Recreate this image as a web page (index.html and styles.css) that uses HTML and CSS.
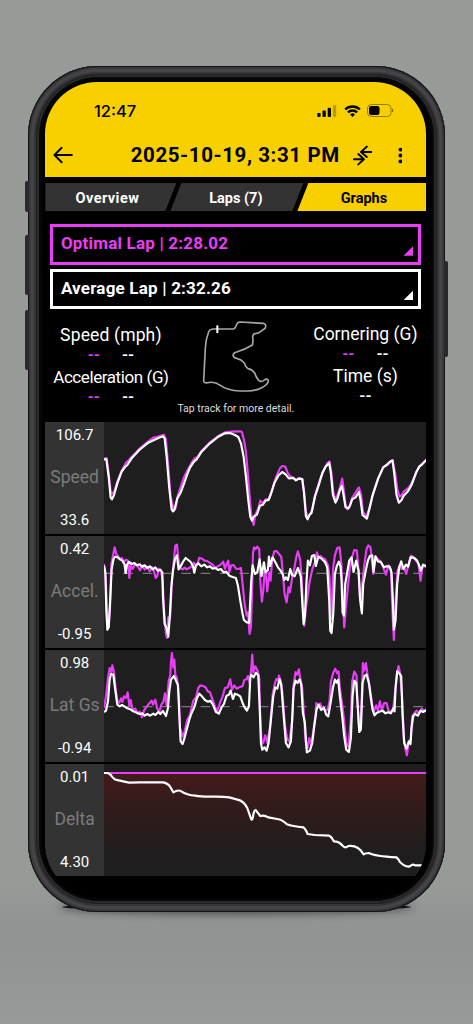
FILE: index.html
```html
<!DOCTYPE html>
<html lang="en">
<head>
  <meta charset="UTF-8">
  <meta name="viewport" content="width=device-width, initial-scale=1.0">
  <title>Session Graphs</title>
  <link rel="stylesheet" href="styles.css">
</head>
<body>
  <div class="phone">
    <span class="side-button mute"></span>
    <span class="side-button vol-up"></span>
    <span class="side-button vol-down"></span>
    <span class="side-button power"></span>

    <div class="screen">
      <header>
        <div class="status-bar">
          <span class="clock">12:47</span>
          <svg class="signal" width="20" height="12" viewBox="0 0 20 12">
            <rect x="0.3" y="8" width="3.3" height="4" rx="1"/>
            <rect x="5.5" y="5.6" width="3.3" height="6.4" rx="1"/>
            <rect x="10.7" y="2.8" width="3.3" height="9.2" rx="1"/>
            <rect x="15.9" y="0" width="3.3" height="12" rx="1" opacity="0.25"/>
          </svg>
          <svg class="wifi" width="17" height="12" viewBox="0 0 17 12">
            <path d="M1.2 4.5a10.4 10.4 0 0 1 14.6 0M3.9 7.4a6.5 6.5 0 0 1 9.2 0" fill="none" stroke="#000" stroke-width="2.3"/>
            <path d="M8.500 12l-2.500-2.600a3.600 3.600 0 0 1 5 0z"/>
          </svg>
          <svg class="battery" width="27" height="13" viewBox="0 0 27 13">
            <rect x="0.5" y="0.5" width="23.500" height="12" rx="3.800" fill="none" stroke="#000" stroke-opacity="0.4"/>
            <rect x="2" y="2" width="10.500" height="9" rx="2.300"/>
            <path d="M25 4.500q1.400 .6 1.400 2t-1.400 2z" opacity="0.45"/>
          </svg>
        </div>

        <div class="title-bar">
          <svg class="back" width="21" height="18" viewBox="0 0 21 18">
            <path d="M9 1.500L1.500 9L9 16.500M1.500 9H19.500"/>
          </svg>
          <h1>2025-10-19, 3:31 PM</h1>
          <svg class="compare" width="20" height="21" viewBox="0 0 20 21">
            <path d="M14.300 1.300L8.300 6.800L14.300 12M8.300 6.800H19M5.500 9L11.300 14.300L5.500 19.700M11.300 14.300H1"/>
          </svg>
          <svg class="more" width="5" height="17" viewBox="0 0 5 17">
            <circle cx="2.500" cy="2.400" r="2"/><circle cx="2.500" cy="8.500" r="2"/><circle cx="2.500" cy="14.600" r="2"/>
          </svg>
        </div>
      </header>

      <nav class="tabs">
        <div class="tab tab-first">Overview</div>
        <div class="tab tab-middle">Laps (7)</div>
        <div class="tab tab-last active">Graphs</div>
      </nav>

      <div class="laps">
        <div class="lap optimal">Optimal Lap | 2:28.02</div>
        <div class="lap average">Average Lap | 2:32.26</div>
      </div>

      <section class="stats">
        <div class="stat-col left">
          <div class="name speed">Speed (mph)</div>
          <div class="values"><span class="purple">--</span><span>--</span></div>
          <div class="name acceleration">Acceleration (G)</div>
          <div class="values"><span class="purple">--</span><span>--</span></div>
        </div>
        <div class="track">
          <svg width="68" height="74" viewBox="486 316 204 222">
            <path class="outline" d="M580 343H518Q506 345 504 358Q497 375 496 400L491 498Q492 506 503 504C520 500 530 504 541 512C560 526 580 528 600 529H625Q648 528 665 519Q686 508 685 497Q681 490 673 496Q664 504 656 497Q648 487 644 475Q636 464 624 462Q616 456 613 445Q604 434 590 431C576 428 576 415 590 412Q612 406 637 391Q640 380 638 368Q638 356 650 356Q658 355 661 351L675 341Q681 329 670 326L600 322Q592 322 589 332Q585 343 580 343Z"/>
            <path class="start" d="M532 332V355"/>
          </svg>
          <p>Tap track for more detail.</p>
        </div>
        <div class="stat-col right">
          <div class="name cornering">Cornering (G)</div>
          <div class="values"><span class="purple">--</span><span>--</span></div>
          <div class="name time">Time (s)</div>
          <div class="values"><span>--</span></div>
        </div>
      </section>

      <section class="charts">
        <div class="chart">
          <div class="axis"><span>106.7</span><b>Speed</b><span>33.6</span></div>
          <svg viewBox="192 6 968 336" preserveAspectRatio="none">
            <polyline class="opt" points="192,116 200,114 206,160 212,215 217,220 223,215 232,185 245,152 258,128 266,121 275,111 300,85 325,64 340,53 350,51 372,44 378,60 384,130 392,230 402,272 407,264 414,225 424,195 432,172 442,152 455,128 465,114 472,112 485,92 510,67 535,48 555,37 575,35 600,34 606,36 612,60 618,95 622,140 628,215 634,285 641,315 646,285 655,265 661,242 669,250 677,238 686,238 697,210 708,172 720,145 727,138 736,140 743,158 750,168 762,174 768,180 777,174 787,177 793,220 798,275 804,292 812,280 817,270 826,225 840,180 852,150 862,130 869,124 874,155 880,215 886,238 893,225 900,203 907,176 911,205 917,255 922,268 929,262 936,235 944,222 957,202 964,225 969,275 980,290 990,260 1000,220 1015,175 1030,142 1046,132 1058,122 1066,160 1073,210 1079,230 1086,225 1092,214 1106,204 1116,188 1130,155 1140,138 1158,120"/>
            <polyline class="avg" points="192,118 199,118 206,170 212,233 216,238 222,225 232,190 245,155 255,141 262,135 275,115 300,88 325,68 350,56 368,49 374,55 380,110 388,205 395,268 399,274 404,268 412,235 422,218 431,194 440,168 450,143 462,125 470,118 485,95 510,70 535,50 555,40 570,39 585,45 595,51 603,70 611,110 618,170 625,240 631,290 636,302 641,290 651,284 660,257 669,254 677,242 686,240 693,222 703,190 715,167 727,156 737,163 747,175 760,174 768,181 777,176 787,177 792,215 798,288 803,298 808,286 815,278 825,230 835,200 847,160 857,140 868,129 873,160 879,225 887,248 893,235 900,210 906,198 911,225 917,262 925,265 931,255 937,238 947,232 957,216 962,240 968,285 981,296 989,265 997,230 1005,205 1015,175 1030,142 1040,135 1050,125 1058,121 1063,160 1070,225 1077,248 1085,240 1091,228 1105,213 1115,195 1130,155 1138,140 1147,133 1160,119"/>
          </svg>
        </div>

        <div class="chart">
          <div class="axis"><span>0.42</span><b>Accel.</b><span>-0.95</span></div>
          <svg viewBox="192 6 968 336" preserveAspectRatio="none">
            <path class="zero" d="M192 118H1160"/>
            <polyline class="opt" points="192,90 197,130 202,250 206,280 210,220 214,90 219,65 224,40 229,60 234,66 240,75 246,72 252,84 258,77 264,80 268,132 272,92 278,105 286,90 294,98 300,109 307,95 314,107 322,98 329,112 336,100 342,112 347,132 352,126 356,104 363,112 368,140 373,240 378,300 381,312 385,250 390,255 396,140 402,75 406,35 411,32 415,75 421,102 428,106 434,101 440,106 448,102 455,97 462,86 468,96 473,88 478,71 486,74 494,80 502,81 510,87 518,92 526,101 534,97 542,92 550,83 555,104 560,90 565,80 568,115 574,94 581,93 588,104 596,105 603,102 608,150 614,210 620,245 624,235 629,300 633,280 636,190 639,60 642,40 647,45 652,38 658,45 661,140 666,203 670,170 674,115 678,120 682,172 688,115 692,140 697,75 703,52 710,51 717,60 724,68 728,108 734,180 740,205 746,160 750,175 757,130 762,110 769,70 774,52 781,78 785,130 790,230 793,276 798,220 802,195 808,150 814,120 819,100 827,80 831,55 836,72 842,66 848,72 855,75 864,93 869,130 873,255 876,210 880,100 885,64 892,42 899,40 904,85 909,190 913,280 918,220 924,160 930,100 936,72 943,48 951,50 956,110 960,190 964,180 969,130 974,88 980,45 985,34 992,40 997,90 1000,120 1006,67 1015,77 1022,82 1030,100 1038,122 1046,94 1053,105 1058,240 1062,318 1067,200 1073,110 1080,94 1085,105 1092,98 1099,120 1107,88 1114,65 1122,72 1130,82 1136,90 1142,140 1148,96 1160,98"/>
            <polyline class="avg" points="192,95 196,115 199,230 202,287 206,280 210,210 215,105 221,74 226,68 233,70 240,76 247,80 254,92 257,117 261,92 267,84 276,90 283,87 291,94 299,91 306,98 314,94 322,102 330,97 338,106 346,100 353,110 361,107 367,115 369,190 374,270 379,280 385,308 390,240 394,160 399,110 405,75 411,64 416,106 423,95 430,82 437,72 445,78 452,84 459,96 463,116 468,94 475,88 484,97 493,92 502,100 510,97 518,104 526,102 535,108 543,105 551,115 559,113 568,125 578,129 588,132 594,155 601,200 608,240 612,258 617,262 621,265 628,266 630,220 634,140 638,94 645,120 652,115 659,76 665,126 672,85 677,115 684,108 687,68 691,96 698,70 706,84 714,100 722,110 729,122 733,138 738,130 744,138 751,105 757,124 764,127 774,102 779,115 783,130 788,220 791,270 795,245 800,140 804,80 810,94 816,66 823,63 828,96 835,68 845,74 855,84 862,100 868,200 871,290 875,297 880,240 885,120 891,95 897,83 902,98 905,140 908,235 912,245 916,150 922,115 928,80 935,70 941,114 949,80 956,110 961,200 966,238 970,150 978,108 984,80 990,66 997,64 1001,114 1007,67 1014,82 1023,84 1032,100 1040,97 1049,98 1055,115 1059,200 1062,287 1067,260 1072,150 1078,100 1084,82 1091,105 1098,92 1105,98 1112,70 1122,71 1132,80 1138,95 1143,110 1150,92 1160,97"/>
          </svg>
        </div>

        <div class="chart">
          <div class="axis"><span>0.98</span><b>Lat Gs</b><span>-0.94</span></div>
          <svg viewBox="192 6 968 336" preserveAspectRatio="none">
            <path class="zero" d="M192 176H1160"/>
            <polyline class="opt" points="192,180 198,145 204,90 209,60 214,72 217,52 222,72 226,112 232,160 238,164 243,151 247,162 252,145 258,150 263,133 268,172 272,156 278,185 286,182 293,196 299,191 306,208 312,188 320,176 328,166 335,158 339,170 346,155 351,180 358,192 364,170 370,162 375,136 380,174 386,100 391,80 393,40 396,15 400,58 403,35 406,80 411,90 417,150 420,240 428,265 434,250 442,215 450,200 460,158 468,148 475,120 481,112 489,114 497,118 503,130 510,133 518,155 525,175 532,190 540,165 548,145 555,120 563,118 571,94 576,125 583,112 590,122 598,118 608,115 613,96 620,94 624,84 629,106 634,60 637,20 640,73 646,55 653,68 658,90 660,180 665,280 670,285 676,262 682,285 690,240 698,140 704,110 709,93 714,98 717,83 722,98 727,130 735,230 742,275 748,280 757,220 761,110 767,72 772,80 777,64 780,85 787,120 792,200 797,280 803,300 808,270 814,290 820,250 827,200 829,165 834,172 841,166 845,180 850,176 857,190 864,182 869,160 873,100 880,75 886,62 892,76 896,70 900,120 907,170 913,220 920,290 926,295 933,210 937,100 943,71 950,82 952,150 957,230 963,220 966,140 969,45 973,68 978,45 983,80 990,120 997,170 1002,190 1009,172 1014,188 1020,160 1026,187 1033,165 1040,165 1046,188 1054,193 1060,182 1066,130 1071,80 1076,54 1081,78 1087,150 1092,270 1097,305 1101,322 1106,290 1113,270 1117,205 1124,195 1130,188 1138,196 1146,182 1152,188 1160,187"/>
            <polyline class="avg" points="192,192 198,188 204,160 209,95 213,78 220,80 225,120 232,170 239,175 246,171 254,176 262,181 271,184 280,190 290,194 299,198 307,196 314,203 322,198 330,203 340,197 346,201 355,192 361,198 369,189 378,204 384,180 388,130 393,95 402,84 408,98 414,110 418,200 422,280 428,288 433,272 440,245 448,215 455,195 463,178 471,150 478,137 486,145 495,156 503,161 511,158 519,170 528,192 537,197 545,178 552,168 560,143 567,140 572,128 579,153 585,137 593,140 601,145 608,165 614,178 621,188 627,175 631,90 634,80 641,88 648,74 655,82 659,170 663,285 667,305 674,298 680,308 686,285 693,215 700,145 706,118 712,122 719,94 724,110 731,200 738,285 746,298 753,280 758,190 761,120 767,98 773,105 779,94 784,110 789,195 795,225 799,290 801,313 810,308 817,285 823,235 830,185 836,170 844,186 852,180 859,200 865,205 872,165 879,120 885,95 890,104 895,95 900,145 907,205 913,265 919,305 927,312 933,270 938,145 943,98 949,105 954,180 958,252 963,245 968,105 974,84 980,80 987,105 993,150 998,185 1004,202 1010,195 1018,191 1028,188 1037,196 1045,193 1053,196 1061,180 1064,190 1067,120 1072,70 1080,78 1084,85 1088,200 1093,285 1100,302 1107,280 1112,288 1115,240 1120,205 1126,198 1134,203 1142,188 1150,192 1160,186"/>
          </svg>
        </div>

        <div class="chart delta">
          <div class="axis"><span>0.01</span><b>Delta</b><span>4.30</span></div>
          <svg viewBox="192 6 968 336" preserveAspectRatio="none">
            <defs>
              <linearGradient id="loss" x1="0" y1="0" x2="0" y2="1">
                <stop offset="0" stop-color="#431a1a"/>
                <stop offset="0.35" stop-color="#321b1b"/>
                <stop offset="0.8" stop-color="#1e1e1e"/>
              </linearGradient>
            </defs>
            <rect x="192" y="36" width="968" height="306" fill="url(#loss)"/>
            <path class="opt base" d="M192 33H1160"/>
            <path class="avg" d="M192 33H203Q213 37 217 45Q223 54 236 55L267 62L300 61H370Q386 65 391 75L400 91Q415 82 424 88Q440 99 466 101Q480 104 510 104Q550 103 568 106L590 112Q612 116 622 138L634 172Q637 176 639 165Q642 142 648 145L661 162Q673 158 685 166L712 171Q727 173 741 187Q757 193 790 196Q796 199 803 216L825 219L868 221Q875 224 882 238Q898 238 909 252Q917 260 925 252Q955 248 971 277Q977 273 987 273Q1005 283 1070 286Q1078 293 1080 300Q1102 320 1113 311Q1118 305 1126 310H1150"/>
          </svg>
        </div>
      </section>
    </div>
  </div>
  <div class="ground-shadow"></div>
</body>
</html>
```
FILE: styles.css
```css
:root {
  --yellow: #f8d000;
  --purple: #ea3df7;
  --panel: #333;
  --plot: #1e1e1e;
}

* {
  box-sizing: border-box;
}

body {
  margin: 0;
  width: 473px;
  height: 1024px;
  overflow: hidden;
  position: relative;
  background: linear-gradient(#969b98 0%, #969b98 86%, #8f9391 91%, #969a98 100%);
  font-family: Roboto, sans-serif;
  color: #fff;
}

svg {
  display: block;
}

.phone {
  position: relative;
  z-index: 1;
  width: 417px;
  height: 846px;
  margin: 66px 0 0 28px;
  padding: 16px 18.600px 16px 17.400px;
  border-radius: 70px;
  background: #000;
  box-shadow:
    inset 0 0 0 1px #141416,
    inset 0 0 0 3px #39393c,
    inset 0 0 0 6px #454448,
    inset 0 0 0 8px #353537,
    inset 0 0 0 9px #1f1f20,
    inset 0 0 0 11px #2a2a2a,
    inset 0 0 4px 12px #111;
}

.side-button {
  position: absolute;
  width: 4px;
  left: -3px;
  border-radius: 2px 0 0 2px;
  background: #29292c;
  z-index: -1;
}

.mute {
  top: 115px;
  height: 31px;
}

.vol-up {
  top: 169px;
  height: 60px;
}

.vol-down {
  top: 244px;
  height: 60px;
}

.power {
  top: 195px;
  height: 96px;
  left: auto;
  right: -3px;
  border-radius: 0 2px 2px 0;
}

.screen {
  height: 814px;
  border-radius: 52px;
  overflow: hidden;
  background: #000;
}

header {
  height: 95px;
  background: var(--yellow);
  color: #000;
}

.status-bar {
  display: flex;
  align-items: center;
  height: 57px;
  padding: 0 32px 0 48.500px;
}

.clock {
  font-family: Inter, sans-serif;
  font-size: 16.5px;
  font-weight: 500;
  flex: 1;
}

.wifi {
  margin: 0 6px 0 7px;
}

.title-bar {
  display: flex;
  align-items: center;
  height: 32px;
  padding: 0 24px 0 8px;
}

.back,
.compare {
  fill: none;
  stroke: #000;
  stroke-width: 2;
  stroke-linecap: round;
  stroke-linejoin: round;
}

h1 {
  flex: 1;
  margin: 0 13px 0 57px;
  font-size: 20.5px;
  font-weight: 700;
  letter-spacing: 0.6px;
  white-space: nowrap;
}

.compare {
  margin-right: 25.500px;
}

.tabs {
  display: flex;
  height: 28px;
  margin: 6px 0 13.300px;
  font-size: 14.5px;
  font-weight: 700;
  line-height: 32px;
  text-align: center;
}

.tab {
  background: var(--panel);
}

.tab-first {
  width: 131px;
  padding-right: 7px;
  letter-spacing: 0.45px;
  clip-path: polygon(0 0, 100% 0, calc(100% - 11px) 100%, 0 100%);
}

.tab-middle {
  width: 133px;
  margin-left: -6px;
  padding-right: 2px;
  clip-path: polygon(11px 0, 100% 0, calc(100% - 11px) 100%, 0 100%);
}

.tab-last {
  flex: 1;
  margin-left: -6px;
  padding-left: 4px;
  clip-path: polygon(11px 0, 100% 0, 100% 100%, 0 100%);
}

.tab.active {
  background: var(--yellow);
  color: #000;
}

.laps {
  display: flex;
  flex-direction: column;
  gap: 4px;
  padding: 0 5px;
}

.lap {
  position: relative;
  height: 40.5px;
  padding-left: 7.500px;
  border: 3px solid;
  font-size: 17px;
  font-weight: 700;
  line-height: 33px;
  letter-spacing: 0.2px;
}

.lap::after {
  content: "";
  position: absolute;
  right: 5px;
  bottom: 6px;
  width: 10px;
  height: 10px;
  background: currentColor;
  clip-path: polygon(100% 0, 100% 100%, 0 100%);
}

.optimal,
.purple {
  color: var(--purple);
}

.stats {
  display: grid;
  grid-template-columns: 131px 119px 131px;
  height: 112.700px;
  text-align: center;
}

.stat-col {
  padding-top: 15.500px;
}

.stat-col.right {
  padding: 14.500px 0 0 9px;
}

.name {
  height: 21px;
  font-size: 17.500px;
  line-height: 21px;
  white-space: nowrap;
}

.speed {
  letter-spacing: 0.15px;
}

.acceleration {
  font-size: 17px;
  letter-spacing: -0.42px;
}

.values {
  display: flex;
  justify-content: center;
  gap: 22px;
  height: 21px;
  font-size: 15.5px;
  font-weight: 700;
  line-height: 18px;
}

.track svg {
  margin: 11px 0 0 25.500px;
}

.track p {
  margin: 8px 0 0;
  font-size: 10.5px;
  line-height: 14px;
  white-space: nowrap;
  color: #ddd;
}

.outline {
  fill: none;
  stroke: #a6a6a6;
  stroke-width: 5;
}

.start {
  stroke: #fff;
  stroke-width: 6;
}

.charts {
  display: flex;
  flex-direction: column;
  gap: 2px;
}

.chart {
  display: flex;
  height: 112px;
}

.chart svg {
  flex: 1;
  height: 112px;
  background: var(--plot);
}

.axis {
  display: flex;
  flex-direction: column;
  justify-content: space-between;
  align-items: center;
  width: 58.5px;
  padding: 4px 0 5px;
  background: var(--panel);
  font-size: 15px;
  line-height: 18px;
}

.axis b {
  font-size: 17.500px;
  font-weight: 400;
  color: #7b7b7b;
}

.opt,
.avg {
  fill: none;
  stroke-width: 6.5;
  stroke-linejoin: round;
}

.opt {
  stroke: var(--purple);
}

.avg {
  stroke: #fff;
}

.zero {
  stroke: #777;
  stroke-width: 4;
  stroke-dasharray: 29 29;
}

.ground-shadow {
  position: absolute;
  left: 62px;
  top: 903px;
  width: 349px;
  height: 8px;
  border-radius: 50%;
  background: #111;
  box-shadow: 0 0 9px 3px rgba(0, 0, 0, 0.5);
}
```
